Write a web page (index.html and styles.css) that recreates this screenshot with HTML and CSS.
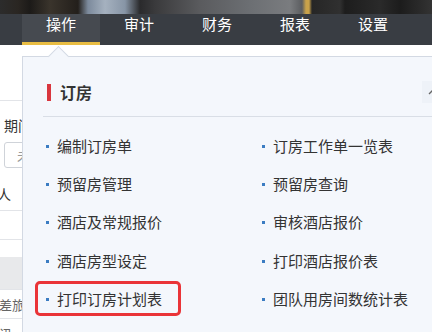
FILE: index.html
```html
<!DOCTYPE html>
<html lang="zh-CN">
<head>
  <meta charset="UTF-8">
  <meta name="viewport" content="width=device-width, initial-scale=1.0">
  <title>操作 - 订房</title>

  <link rel="stylesheet" href="styles.css">
</head>
<body>
  <header class="site-header">
    <div class="site-header__photo"></div>
    <nav class="main-nav">
      <a class="main-nav__tab main-nav__tab--active" href="#">操作</a>
      <a class="main-nav__tab" href="#">审计</a>
      <a class="main-nav__tab" href="#">财务</a>
      <a class="main-nav__tab" href="#">报表</a>
      <a class="main-nav__tab" href="#">设置</a>
    </nav>
  </header>

  <main class="page">
    <div class="page-row page-row--top"></div>
    <div class="page-field">
      <label class="page-field__label">期间</label>
      <span class="page-field__input">未选择</span>
    </div>
    <div class="page-row page-row--person">经办人</div>
    <div class="page-row page-row--blank"></div>
    <div class="page-row page-row--band"></div>
    <div class="page-row page-row--text">出差旅费</div>
    <div class="page-row page-row--text">资讯</div>
  </main>

  <section class="dropdown">
    <div class="dropdown-heading">
      <h2 class="dropdown-heading__title">订房</h2>
      <span class="dropdown-heading__toggle">
        <svg width="10" height="6" viewBox="0 0 10 6"><path d="M1 5 L5 1 L9 5" fill="none" stroke="#666" stroke-width="1.3"/></svg>
      </span>
    </div>

    <ul class="menu-list">
      <li class="menu-item">编制订房单</li>
      <li class="menu-item">订房工作单一览表</li>
      <li class="menu-item">预留房管理</li>
      <li class="menu-item">预留房查询</li>
      <li class="menu-item">酒店及常规报价</li>
      <li class="menu-item">审核酒店报价</li>
      <li class="menu-item">酒店房型设定</li>
      <li class="menu-item">打印酒店报价表</li>
      <li class="menu-item menu-item--marked">打印订房计划表</li>
      <li class="menu-item">团队用房间数统计表</li>
    </ul>
  </section>
</body>
</html>
```

FILE: styles.css
```css
body, html {
  margin: 0;
  font-family: "Noto Sans CJK SC", "Noto Sans", sans-serif;
  color: #333;
}

body {
  background: white;
  overflow: hidden;
  height: 332px;
  position: relative;
}

.site-header__photo {
  height: 14px;
  background: linear-gradient(90deg,
    #2c2c2c 0, #2a2622 18px, #1c1a18 30px, #3a342c 50px, #231f1b 78px,
    #7c8a9c 88px, #a5b1bf 105px, #8795a6 125px, #2a2a2c 140px,
    #3a3a3c 155px, #5a5b5e 200px, #6c6f73 250px, #7a7c7f 290px,
    #5b5d60 302px, #c9a24a 306px, #c9a24a 309px, #262626 312px,
    #303030 340px, #1d1d1d 345px, #2a2a2a 380px, #1c1c1c 400px, #333 432px);
}

.main-nav {
  display: flex;
  padding-left: 22px;
  background: #393d43;
}

.main-nav__tab {
  width: 78px;
  padding-bottom: 8px;
  border-bottom: 3px solid transparent;
  font-size: 15px;
  line-height: 20px;
  text-align: center;
  color: white;
  text-decoration: none;
}

.main-nav__tab--active {
  background: #464a50;
  border-bottom-color: #e9bd43;
}

/* the page behind the menu */
.page {
  font-size: 14px;
}

.page-row {
  border-bottom: 1px solid #e2e4e8;
}

.page-row--top {
  height: 55px;
}

.page-field {
  padding: 14px 0 0 4px;
}

.page-field__label {
  display: block;
  line-height: 20px;
}

.page-field__input {
  display: block;
  width: 140px;
  height: 24px;
  margin-top: 7px;
  border: 1px solid #cfd3d9;
  border-radius: 3px;
  padding-left: 12px;
  line-height: 24px;
  color: #999;
}

.page-row--person {
  height: 32px;
  padding-top: 10px;
  line-height: 32px;
  margin-left: -31px;
}

.page-row--blank {
  height: 28px;
}

.page-row--band {
  height: 32px;
  margin-top: 17px;
  background: #e8e9eb;
}

.page-row--text {
  height: 28px;
  line-height: 30px;
  margin-left: -14px;
  font-size: 13px;
  color: #666;
}

/* dropdown menu over the page */
.dropdown {
  position: absolute;
  left: 22px;
  top: 56px;
  width: 440px;
  height: 300px;
  background: #f4f7fc;
  border: 1px solid #d3d9e3;
}

.dropdown::before {
  content: "";
  position: absolute;
  left: 28px;
  top: -8px;
  width: 14px;
  height: 14px;
  background: #f4f7fc;
  border-top: 1px solid #d3d9e3;
  border-left: 1px solid #d3d9e3;
  transform: rotate(45deg);
}

.dropdown-heading {
  display: flex;
  align-items: center;
  margin-left: 20px;
  padding: 24px 0 13px 4px;
  border-bottom: 1px solid #d9dee6;
}

.dropdown-heading__title {
  margin: 0;
  padding-left: 9px;
  border-left: 4px solid #d9363e;
  font-size: 16px;
  line-height: 17px;
  font-weight: bold;
  height: 17px;
  display: flex;
  align-items: center;
}

.dropdown-heading__toggle {
  margin-left: 330px;
  width: 22px;
  height: 22px;
  display: flex;
  align-items: center;
  justify-content: center;
  background: #eef2f8;
}

.menu-list {
  display: grid;
  grid-template-columns: 216px 216px;
  grid-auto-rows: 38.33px;
  margin: 0;
  padding: 9px 0 0 23px;
  list-style: none;
}

.menu-item {
  position: relative;
  display: flex;
  align-items: center;
  gap: 8px;
  width: max-content;
  font-size: 15px;
  color: #333;
}

.menu-item::before {
  content: "";
  width: 3px;
  height: 3px;
  margin-top: 2px;
  background: #3b7cc2;
}

.menu-item--marked::after {
  content: "";
  position: absolute;
  left: -11px;
  right: -19px;
  top: 2px;
  bottom: 2px;
  border: 3px solid #ea3438;
  border-radius: 5px;
}
```
